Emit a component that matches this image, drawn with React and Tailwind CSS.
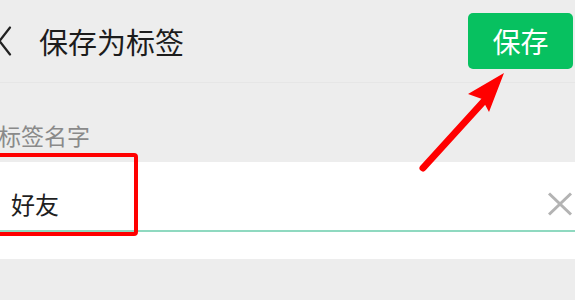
import React from "react";

const font = { fontFamily: '"Noto Sans CJK SC", "Noto Sans", sans-serif' };

export default function App() {
  return (
    <div className="relative w-[575px] h-[300px] overflow-hidden bg-[#ededed]" style={font}>
      {/* Header */}
      <div className="relative flex items-center h-[83px] border-b border-[#e6e6e6]">
        <svg className="absolute left-[-3px] top-[26px]" width="16" height="30" viewBox="0 0 16 30">
          <polyline points="13,1.5 2.5,15 13,28.5" fill="none" stroke="#222" strokeWidth="2.2" strokeLinecap="round" strokeLinejoin="round" />
        </svg>
        <div className="ml-[39px] text-[29px] leading-none text-[#1c1c1c]">保存为标签</div>
        <div className="ml-auto mr-[2px] w-[105px] h-[56px] rounded-[5px] bg-[#07c160] flex items-center justify-center text-[28px] leading-none text-white">
          保存
        </div>
      </div>

      {/* Label */}
      <div className="mt-[41px] ml-[-2px] text-[23px] leading-none text-[#8a8a8a]">标签名字</div>

      {/* Panel */}
      <div className="mt-[15px] bg-white h-[97px]">
        <div className="flex items-center pt-[30px] pb-[14px] border-b-2 border-[#8fd9c0]">
          <div className="ml-[11px] text-[24px] leading-none text-[#1f1f1f]">好友</div>
          <svg className="ml-auto mr-[2px]" width="26" height="24" viewBox="0 0 26 24">
            <line x1="2" y1="1.5" x2="24" y2="22.5" stroke="#b3b3b3" strokeWidth="3" />
            <line x1="24" y1="1.5" x2="2" y2="22.5" stroke="#b3b3b3" strokeWidth="3" />
          </svg>
        </div>
      </div>

      {/* Red box overlay */}
      <div className="absolute left-[-6px] top-[153px] w-[144px] h-[83px] border-4 border-[#ff0000] rounded-[4px]" />

      {/* Red arrow overlay */}
      <svg className="absolute left-0 top-0" width="575" height="300" viewBox="0 0 575 300">
        <line x1="423" y1="168" x2="484" y2="101" stroke="#ff0000" strokeWidth="7" strokeLinecap="round" />
        <polygon points="504,73 468,94 482,99 489,112" fill="#ff0000" />
      </svg>
    </div>
  );
}
